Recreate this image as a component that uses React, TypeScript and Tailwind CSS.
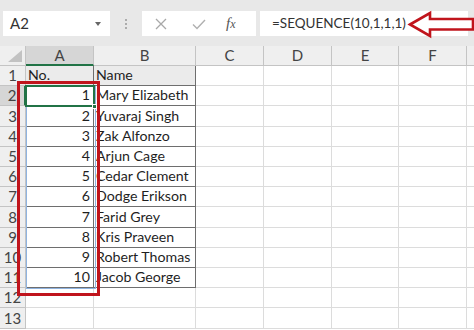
import { useState } from 'react';

const cols = [
  { key: 'A', w: 'w-[68px]' },
  { key: 'B', w: 'w-[102px]' },
  { key: 'C', w: 'w-[68px]' },
  { key: 'D', w: 'w-[68px]' },
  { key: 'E', w: 'w-[67px]' },
  { key: 'F', w: 'w-[68px]' },
  { key: '', w: 'w-[68px]' },
];

const names = [
  'Mary Elizabeth',
  'Yuvaraj Singh',
  'Zak Alfonzo',
  'Arjun Cage',
  'Cedar Clement',
  'Dodge Erikson',
  'Farid Grey',
  'Kris Praveen',
  'Robert Thomas',
  'Jacob George',
];

// row heights drift a little in the screenshot (~20.2px each)
const rowH = [
  'h-[20px]', 'h-[20px]', 'h-[21px]', 'h-[20px]', 'h-[20px]', 'h-[20px]', 'h-[20px]',
  'h-[21px]', 'h-[20px]', 'h-[20px]', 'h-[20px]', 'h-[20px]', 'h-[21px]',
];

function cellText(row: number, col: string) {
  if (row === 1 && col === 'A') return 'No.';
  if (row === 1 && col === 'B') return 'Name';
  if (row >= 2 && row <= 11 && col === 'A') return String(row - 1);
  if (row >= 2 && row <= 11 && col === 'B') return names[row - 2];
  return '';
}

export default function App() {
  const [active] = useState({ row: 2, col: 'A' });

  return (
    <div className="relative w-[474px] h-[330px] overflow-hidden bg-white text-[#1f1f1f] font-['Lato',sans-serif]">
      {/* Formula bar */}
      <div className="flex h-[46px] items-start bg-[#e8e8e8] pt-[11px] pl-[3px]">
        <div className="flex h-[25px] w-[107px] items-center justify-between bg-white pl-[7px] pr-[9px] text-[15px] text-[#333]">
          <span>{active.col}{active.row}</span>
          <span className="h-0 w-0 border-x-[3px] border-t-[4px] border-x-transparent border-t-[#666]" />
        </div>
        <div className="flex h-[25px] w-[32px] flex-col items-center justify-center gap-[2px]">
          <span className="h-[2px] w-[2px] rounded-full bg-[#999]" />
          <span className="h-[2px] w-[2px] rounded-full bg-[#999]" />
          <span className="h-[2px] w-[2px] rounded-full bg-[#999]" />
        </div>
        <div className="flex h-[25px] w-[114px] items-center bg-white">
          <svg width="14" height="14" viewBox="0 0 14 14" className="ml-[12px]">
            <path d="M2 2 L12 12 M12 2 L2 12" stroke="#a8a8a8" strokeWidth="1.3" fill="none" />
          </svg>
          <svg width="16" height="14" viewBox="0 0 16 14" className="ml-[23px]">
            <path d="M2 7.5 L6 11.5 L14 3" stroke="#b0b0b0" strokeWidth="1.4" fill="none" />
          </svg>
          <span className="ml-[19px] font-['Liberation_Serif',serif] text-[15px] italic text-[#555]">
            f<span className="text-[12px]">x</span>
          </span>
        </div>
        <div className="ml-[4px] flex h-[25px] w-[208px] items-center bg-white pl-[12px] text-[13.5px] text-[#333]">
          =SEQUENCE(10,1,1,1)
        </div>
      </div>

      {/* Column headers */}
      <div className="flex h-[20px]">
        <div className="relative w-[26px] shrink-0 border-r border-b border-[#c4c4c4] bg-[#efefef]">
          <svg width="14" height="12" viewBox="0 0 14 12" className="absolute bottom-[3px] right-[3px]">
            <path d="M14 0 L14 12 L0 12 Z" fill="#c2c2c2" />
          </svg>
        </div>
        {cols.map((c, i) => (
          <div
            key={i}
            className={
              c.key === active.col
                ? `${c.w} shrink-0 flex items-center justify-center border-r border-[#c4c4c4] border-b-2 border-b-[#217346] bg-[#d6d6d6] text-[15px] text-[#444]`
                : `${c.w} shrink-0 flex items-center justify-center border-r border-b border-[#c4c4c4] bg-[#efefef] text-[15px] text-[#444]`
            }
          >
            {c.key}
          </div>
        ))}
      </div>

      {/* Rows */}
      {rowH.map((h, i) => {
        const row = i + 1;
        return (
          <div key={row} className={`flex ${h}`}>
            <div
              className={
                row === active.row
                  ? 'w-[26px] shrink-0 flex items-center justify-center border-b border-[#c4c4c4] border-r-2 border-r-[#217346] bg-[#d6d6d6] text-[15px] text-[#444]'
                  : 'w-[26px] shrink-0 flex items-center justify-center border-r border-b border-[#c4c4c4] bg-[#efefef] text-[15px] text-[#444]'
              }
            >
              {row}
            </div>
            {cols.map((c, j) => {
              const inTable = row <= 11 && (c.key === 'A' || c.key === 'B');
              const text = cellText(row, c.key);
              const isNum = row >= 2 && c.key === 'A';
              return (
                <div
                  key={j}
                  className={[
                    c.w,
                    'shrink-0 flex items-center overflow-visible whitespace-nowrap border-r border-b text-[14.2px] leading-none',
                    inTable ? 'border-[#6e6e6e]' : 'border-[#dcdcdc]',
                    row === 1 && inTable ? 'bg-[#ebebeb]' : '',
                    isNum ? 'justify-end pr-[3px]' : 'pl-[2px]',
                  ].join(' ')}
                >
                  {text}
                </div>
              );
            })}
          </div>
        );
      })}

      {/* Spill range outline A2:A11 */}
      <div className="pointer-events-none absolute left-[26px] top-[86px] h-[203px] w-[70px] border border-[#8fb3e0]" />

      {/* Active cell A2 */}
      <div className="pointer-events-none absolute left-[25px] top-[85px] h-[22px] w-[70px] border-2 border-[#217346]">
        <div className="absolute -bottom-[4px] -right-[4px] h-[5px] w-[5px] border border-white bg-[#217346]" />
      </div>

      {/* Red annotation box */}
      <div className="pointer-events-none absolute left-[17px] top-[81px] h-[215px] w-[83px] border-[3px] border-[#c0141c]" />

      {/* Red arrow */}
      <svg width="70" height="30" viewBox="0 0 70 30" className="pointer-events-none absolute left-[405px] top-[10px]">
        <path
          d="M5 14.5 L25 3 L25 9 L68 9 L68 19.5 L25 19.5 L25 26 Z"
          fill="white"
          stroke="#c0141c"
          strokeWidth="2.6"
          strokeLinejoin="miter"
        />
      </svg>
    </div>
  );
}
